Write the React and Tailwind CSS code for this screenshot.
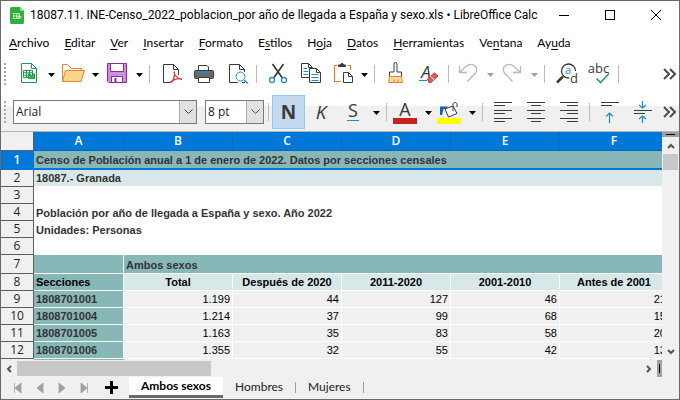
import React, { useState } from 'react';

const MENUS = [
  ['', 'A', 'rchivo'],
  ['', 'E', 'ditar'],
  ['', 'V', 'er'],
  ['', 'I', 'nsertar'],
  ['', 'F', 'ormato'],
  ['E', 's', 'tilos'],
  ['H', 'o', 'ja'],
  ['', 'D', 'atos'],
  ['', 'H', 'erramientas'],
  ['Ve', 'n', 'tana'],
  ['Ay', 'u', 'da'],
];

const COLUMNS = ['A', 'B', 'C', 'D', 'E', 'F'];
const HEADINGS = ['Total', 'Después de 2020', '2011-2020', '2001-2010', 'Antes de 2001'];
const ROWS = [
  { n: 9, section: '1808701001', values: ['1.199', '44', '127', '46', '21'] },
  { n: 10, section: '1808701004', values: ['1.214', '37', '99', '68', '15'] },
  { n: 11, section: '1808701005', values: ['1.163', '35', '83', '58', '20'] },
  { n: 12, section: '1808701006', values: ['1.355', '32', '55', '42', '13'] },
];
const SHEETS = ['Ambos sexos', 'Hombres', 'Mujeres'];

const DARK = '#3a3a38';
const BLUE = '#1e8bcd';

function Icon({ children }) {
  return (
    <svg viewBox="0 0 32 28" fill="none" stroke={DARK} className="w-8 h-7 shrink-0 overflow-visible" aria-hidden="true">
      {children}
    </svg>
  );
}

function IconText({ children, ...props }) {
  return (
    <text stroke="none" fill={DARK} fontFamily="'Open Sans', sans-serif" textAnchor="middle" {...props}>
      {children}
    </text>
  );
}

const icons = {
  newSheet: (
    <Icon>
      <path d="M8.500 3.500H18.500L23.500 8.500V22.500H8.500Z" fill="#fff" stroke="#1f9a4a" />
      <path d="M18.500 3.500V8.500H23.500" stroke="#1f9a4a" />
      <path d="M10.500 10.500H19.500V17.500H10.500ZM10.500 12.800H19.500M10.500 15.200H19.500M13.500 10.500V17.500M16.500 10.500V17.500" stroke="#1f9a4a" />
      <path d="M15.500 18.500V14H17.500V16H19.500V14H21.500V18.500Z" fill="#35c35f" stroke="#1f9a4a" />
    </Icon>
  ),
  open: (
    <Icon>
      <path d="M5.500 22V4.500H10.500L14.500 8.500H24.500V10.500" stroke="#e8822c" />
      <path d="M8.500 10.500H27.500L24 21.500H5.500Z" fill="#f9d78a" stroke="#e8822c" />
    </Icon>
  ),
  save: (
    <Icon>
      <path d="M6.500 3.500H25.500V22.500H8L6.500 21Z" fill="#cf8edb" stroke="#902a9c" />
      <path d="M9.500 3.500V11.500H22.500V3.500Z" fill="#fff" stroke="#902a9c" />
      <path d="M10.500 22.500V16.500H21.500V22.500Z" fill="#fff" stroke="#902a9c" />
      <path d="M14.500 18V22.500" stroke="#902a9c" strokeWidth="2" />
    </Icon>
  ),
  pdf: (
    <Icon>
      <path d="M17 22.500H10.500V4.500H20.500L25.500 9.500V15M20.500 4.500V9.500H25.500" />
      <path d="M21.500 12C20 12 23 18.500 28.500 19.500C29 17.500 22 18.500 17.500 22C18.500 24 22.500 17 21.500 12Z" stroke="#d8383a" strokeWidth="1.200" />
    </Icon>
  ),
  print: (
    <Icon>
      <path d="M12.500 12V5.500H21L22.500 7V12" fill="#fff" />
      <rect x="8.500" y="10.500" width="19" height="8" rx="1" fill="#6e6768" />
      <path d="M12 12H23" stroke={BLUE} strokeWidth="2" />
      <path d="M12.500 17.500H23.500V22.500H12.500Z" fill="#fff" />
    </Icon>
  ),
  preview: (
    <Icon>
      <path d="M19 22.500H10.500V4.500H20.500L25.500 9.500V12M20.500 4.500V9.500H25.500M23 22.500H26" />
      <circle cx="21.500" cy="16.500" r="4.500" stroke={BLUE} />
      <path d="M25 20L29 23.500" stroke={BLUE} strokeWidth="1.500" />
    </Icon>
  ),
  cut: (
    <Icon>
      <path d="M12.500 4L22 17.500M23.500 4L14 17.500" strokeWidth="1.700" />
      <circle cx="12" cy="20" r="2.500" stroke={BLUE} strokeWidth="1.300" />
      <circle cx="24" cy="20" r="2.500" stroke={BLUE} strokeWidth="1.300" />
    </Icon>
  ),
  copy: (
    <Icon>
      <path d="M16 17.500H8.500V3.500H15.500L19.500 7.500M15.500 3.500V7.500H19.500" />
      <path d="M16.500 8.500H23.500L27.500 12.500V22.500H16.500ZM23.500 8.500V12.500H27.500" />
      <path d="M10.500 8.500H14M10.500 11.500H15M10.500 14.500H15M18.500 14.500H25.500M18.500 17.500H25.500M18.500 20.500H25.500" stroke={BLUE} />
    </Icon>
  ),
  paste: (
    <Icon>
      <path d="M11 5.500H8.500V21.500H15M21.500 5.500H24.500V10" stroke="#e8822c" strokeWidth="1.200" />
      <path d="M12.500 6.500V5H14.500A1.500 1.500 0 0 1 17.500 5H19.500V6.500Z" fill={DARK} />
      <path d="M17.500 12.500H22.500L26.500 16.500V22.500H17.500ZM22.500 12.500V16.500H26.500" fill="#fff" />
    </Icon>
  ),
  brush: (
    <Icon>
      <path d="M16 12V4A1.500 1.500 0 0 1 19 4V12H23.500V16.500H11.500V12Z" fill="#fff" />
      <path d="M11.500 16.500H23.500L24.500 22.500H10.500Z" fill="#fbd9a0" stroke="#e8822c" />
      <path d="M15.500 22L17 19.500M19.500 22L20.500 19.500" stroke="#e8822c" />
    </Icon>
  ),
  clear: (
    <Icon>
      <IconText x="15" y="18" fontSize="17" fontStyle="italic">A</IconText>
      <path d="M8 20.500H16" stroke={BLUE} />
      <path d="M16.500 19L23.500 13L27 16L20 22.500H18Z" fill="#e0575a" stroke="#d0393e" />
      <path d="M19.500 16.500L23 19.500" stroke="#fff" />
    </Icon>
  ),
  undo: (
    <Icon>
      <path d="M7.500 6V12.500H15M7.500 12.500L14 6.500C20 1.500 27.500 7 23.500 13L15.500 21.500" stroke="#b9b9b9" strokeWidth="1.300" />
    </Icon>
  ),
  redo: (
    <Icon>
      <path d="M24.500 6V12.500H17M24.500 12.500L18 6.500C12 1.500 4.500 7 8.500 13L16.500 21.500" stroke="#b9b9b9" strokeWidth="1.300" />
    </Icon>
  ),
  find: (
    <Icon>
      <path d="M21 18A7 7 0 1 1 27.500 11" strokeWidth="1.300" />
      <path d="M15 16.500L9 22.500" strokeWidth="2.500" />
      <IconText x="20" y="14" fontSize="11" fill={BLUE}>a</IconText>
      <IconText x="26" y="23" fontSize="13">d</IconText>
    </Icon>
  ),
  spelling: (
    <Icon>
      <IconText x="17.500" y="13" fontSize="13">abc</IconText>
      <path d="M15.500 18.500L19.500 22.500L28 13.500" stroke="#27a55a" strokeWidth="1.700" />
    </Icon>
  ),
  bold: (
    <Icon>
      <IconText x="16.500" y="20.500" fontSize="19" fontWeight="700">N</IconText>
    </Icon>
  ),
  italic: (
    <Icon>
      <IconText x="16" y="20.500" fontSize="19" fontStyle="italic">K</IconText>
    </Icon>
  ),
  underline: (
    <Icon>
      <IconText x="15" y="19" fontSize="18">S</IconText>
      <path d="M9 22.500H21" stroke={BLUE} />
    </Icon>
  ),
  fontColor: (
    <Icon>
      <IconText x="15" y="18" fontSize="18">A</IconText>
      <rect x="3" y="20" width="24" height="6" fill="#c9211e" stroke="none" />
    </Icon>
  ),
  highlight: (
    <Icon>
      <path d="M6 17V8.500H14L12 11H9.500L8 17Z" fill="#1565b5" stroke="none" />
      <path d="M11 11L19 8L23 15.500L14.500 19Z" fill="#fff" />
      <path d="M19 13V6C19 4 23 4 23 6V9" />
      <rect x="3" y="20" width="24" height="6" fill="#ffff00" stroke="none" />
    </Icon>
  ),
  alignLeft: (
    <Icon>
      <path d="M8 4.500H26M8 7.500H19M8 12.500H26M8 15.500H19M8 20.500H26M8 23.500H19" />
    </Icon>
  ),
  alignCenter: (
    <Icon>
      <path d="M8 4.500H26M12 7.500H22M8 12.500H26M12 15.500H22M8 20.500H26M12 23.500H22" />
    </Icon>
  ),
  alignRight: (
    <Icon>
      <path d="M8 4.500H26M15 7.500H26M8 12.500H26M15 15.500H26M8 20.500H26M15 23.500H26" />
    </Icon>
  ),
  alignTop: (
    <Icon>
      <path d="M8 4.500H26M8 7.500H19" />
      <path d="M16.500 25V15M13 18.500L16.500 15L20 18.500" stroke={BLUE} strokeWidth="1.200" />
    </Icon>
  ),
  alignMiddle: (
    <Icon>
      <path d="M8 12.500H26M8 15.500H19" />
      <path d="M16.500 3V10M13 7L16.500 10L20 7M16.500 25V18M13 21L16.500 18L20 21" stroke={BLUE} strokeWidth="1.200" />
    </Icon>
  ),
};

function ToolButton({ icon, label, active }) {
  return (
    <button
      type="button"
      aria-label={label}
      className={`flex h-[34px] w-[33px] shrink-0 items-center ${active ? 'bg-[#c3d9f0] outline-1 -outline-offset-1 outline-[#90c8f6]' : ''}`}
    >
      {icons[icon]}
    </button>
  );
}

function SplitButton({ icon, label, disabled }) {
  return (
    <div className="flex shrink-0 items-center">
      <button type="button" aria-label={label} disabled={disabled} className="flex h-[34px] w-8 items-center">
        {icons[icon]}
      </button>
      <button type="button" aria-label={`${label}: opciones`} disabled={disabled} className="flex h-[34px] w-3 items-center justify-center">
        <svg viewBox="0 0 7 4" className={`mt-0.5 h-1 w-[7px] ${disabled ? 'fill-[#a0a0a0]' : 'fill-black'}`} aria-hidden="true">
          <path d="M0 0H7L3.500 4Z" />
        </svg>
      </button>
    </div>
  );
}

function Divider() {
  return (
    <span className="flex w-2 shrink-0 justify-center">
      <span className="h-[18px] w-px bg-[#bcbcbc]" />
    </span>
  );
}

function Grip() {
  return <span className="mr-[7px] ml-[3px] h-[22px] w-0.5 shrink-0 bg-[repeating-linear-gradient(to_bottom,#a8a8a8_0_2px,transparent_2px_4px)]" />;
}

function Overflow() {
  return (
    <button type="button" aria-label="Más controles" className="ml-auto flex h-[34px] w-4 shrink-0 items-center">
      <svg viewBox="0 0 14 12" fill="none" stroke="#4a4a4a" strokeWidth="2" className="h-3 w-3.5" aria-hidden="true">
        <path d="M1 1L6 6L1 11M7 1L12 6L7 11" />
      </svg>
    </button>
  );
}

function Combo({ label, value, className }) {
  return (
    <div className={`grid h-6 shrink-0 border border-[#7a7a7a] bg-white ${className}`}>
      <select aria-label={label} defaultValue={value} className="col-start-1 row-start-1 appearance-none pl-0.5 text-[12px] leading-[22px] text-[#222] outline-none">
        <option>{value}</option>
      </select>
      <span className="pointer-events-none col-start-1 row-start-1 flex w-[17px] items-center justify-center justify-self-end border-l border-[#adadad] bg-[#e1e1e1]">
        <svg viewBox="0 0 9 6" fill="none" stroke="#444" className="h-1.5 w-[9px]" aria-hidden="true">
          <path d="M.5 .5L4.500 4.500L8.500 .5" />
        </svg>
      </span>
    </div>
  );
}

function TitleBar() {
  return (
    <header className="flex h-7 items-center pl-[9px]">
      <svg viewBox="0 0 15 17" className="h-[17px] w-[15px] shrink-0" aria-hidden="true">
        <path d="M1.500 0H10L14 4V15.500A1.500 1.500 0 0 1 12.500 17H1.500A1.500 1.500 0 0 1 0 15.500V1.500A1.500 1.500 0 0 1 1.500 0Z" fill="#2fae3c" />
        <path d="M10 0L14 4H10Z" fill="#8be08f" />
        <path d="M3.500 6.500H9.500V11.500H3.500ZM3.500 9H9.500M6.500 6.500V11.500M8 11.500V9.500H11V11.500" fill="none" stroke="#e6ffe8" strokeWidth=".8" />
      </svg>
      <h1 className="ml-[5px] truncate font-['Roboto',sans-serif] text-[12px]">18087.11. INE-Censo_2022_poblacion_por año de llegada a España y sexo.xls • LibreOffice Calc</h1>
      <div className="ml-auto flex shrink-0">
        <button type="button" aria-label="Minimizar" className="flex h-7 w-[46px] items-center justify-center">
          <span className="h-px w-2.5 bg-black" />
        </button>
        <button type="button" aria-label="Maximizar" className="flex h-7 w-[46px] items-center justify-center">
          <span className="size-2.5 border border-black" />
        </button>
        <button type="button" aria-label="Cerrar" className="flex h-7 w-[46px] items-center justify-center">
          <svg viewBox="0 0 10 10" stroke="#000" className="size-2.5" aria-hidden="true">
            <path d="M0 0L10 10M10 0L0 10" />
          </svg>
        </button>
      </div>
    </header>
  );
}

function RowHeader({ children, active }) {
  return (
    <th
      scope="row"
      className={`border-r border-b font-['Open_Sans',sans-serif] text-[12px] leading-none ${active ? 'border-[#0078d7] bg-[#0078d7] font-semibold text-white' : 'border-[#5e5e5e] bg-[#f0f0f0] font-normal text-[#222]'}`}
    >
      {children}
    </th>
  );
}

const cell = 'px-0.5 pb-px align-bottom leading-[13px] whitespace-nowrap';

function Sheet() {
  return (
    <div className="min-w-0 flex-1 overflow-hidden">
      <table className="w-[668px] table-fixed border-separate border-spacing-0 font-['Liberation_Sans',Arial,sans-serif] text-[11px]">
        <colgroup>
          <col className="w-[33px]" />
          <col className="w-[90px]" />
          <col span={5} className="w-[109px]" />
        </colgroup>
        <thead className="font-['Open_Sans',sans-serif]">
          <tr className="h-[19px]">
            <th aria-label="Seleccionar todo" className="border-r border-b border-[#5e5e5e] bg-[#f0f0f0]" />
            {COLUMNS.map((c) => (
              <th key={c} scope="col" className="border-r border-b border-[#0067b9] bg-[#0078d7] text-[12px] leading-none font-semibold text-white">
                {c}
              </th>
            ))}
          </tr>
        </thead>
        <tbody>
          <tr className="h-[19px]">
            <RowHeader active>1</RowHeader>
            <td colSpan={6} className={`${cell} border-b-2 border-[#0078d7] bg-[#88b7b7] font-bold text-[#333]`}>
              Censo de Población anual a 1 de enero de 2022. Datos por secciones censales
            </td>
          </tr>
          <tr className="h-[17px]">
            <RowHeader>2</RowHeader>
            <td colSpan={6} className={`${cell} border-b border-white bg-[#d8e8e8] font-bold text-[#333]`}>18087.- Granada</td>
          </tr>
          <tr className="h-[17px]">
            <RowHeader>3</RowHeader>
            <td colSpan={6} />
          </tr>
          <tr className="h-[17px]">
            <RowHeader>4</RowHeader>
            <td colSpan={6} className={`${cell} font-bold text-[#333]`}>Población por año de llegada a España y sexo. Año 2022</td>
          </tr>
          <tr className="h-[17px]">
            <RowHeader>5</RowHeader>
            <td colSpan={6} className={`${cell} font-bold text-[#333]`}>Unidades: Personas</td>
          </tr>
          <tr className="h-[17px]">
            <RowHeader>6</RowHeader>
            <td colSpan={6} />
          </tr>
          <tr className="h-[19px]">
            <RowHeader>7</RowHeader>
            <td className="border-r border-b border-white bg-[#88b7b7]" />
            <td colSpan={5} className={`${cell} border-b border-white bg-[#88b7b7] font-bold text-[#333]`}>Ambos sexos</td>
          </tr>
          <tr className="h-[17px]">
            <RowHeader>8</RowHeader>
            <td className={`${cell} border-r border-b border-white bg-[#88b7b7] font-bold`}>Secciones</td>
            {HEADINGS.map((h) => (
              <td key={h} className={`${cell} border-r border-b border-white bg-[#d8e8e8] text-center font-bold`}>{h}</td>
            ))}
          </tr>
          {ROWS.map((row) => (
            <tr key={row.n} className="h-[17px]">
              <RowHeader>{row.n}</RowHeader>
              <td className={`${cell} border-r border-b border-white bg-[#88b7b7] font-bold text-[#333]`}>{row.section}</td>
              {row.values.map((v, i) => (
                <td key={HEADINGS[i]} className={`${cell} border-r border-b border-white bg-[#f0f0f0] text-right`}>{v}</td>
              ))}
            </tr>
          ))}
          <tr className="h-px" aria-hidden="true">
            <td className="bg-[#f0f0f0] p-0" />
            <td className="bg-[#88b7b7] p-0" />
            <td colSpan={5} className="bg-[#f0f0f0] p-0" />
          </tr>
        </tbody>
      </table>
    </div>
  );
}

function Arrow({ d }) {
  return (
    <svg viewBox="0 0 8 8" fill="none" stroke="#555" strokeWidth="2" className="size-2 shrink-0" aria-hidden="true">
      <path d={d} />
    </svg>
  );
}

function VerticalScroll() {
  return (
    <div className="flex w-[17px] shrink-0 flex-col items-center bg-[#f0f0f0]">
      <span className="flex h-[5px] w-full items-center justify-center bg-[#a0a0a0]">
        <span className="h-px w-[9px] bg-black" />
      </span>
      <button type="button" aria-label="Subir" className="flex h-[17px] w-full items-center justify-center">
        <Arrow d="M1 6L4 3L7 6" />
      </button>
      <span className="h-4 w-[15px] bg-[#c8c8c8]" />
      <button type="button" aria-label="Bajar" className="mt-auto flex h-[17px] w-full items-center justify-center">
        <Arrow d="M1 2L4 5L7 2" />
      </button>
    </div>
  );
}

function HorizontalScroll() {
  return (
    <div className="flex h-[17px] items-center bg-[#f0f0f0] pr-[17px]">
      <button type="button" aria-label="Izquierda" className="flex h-full w-4 items-center justify-center">
        <Arrow d="M6 1L3 4L6 7" />
      </button>
      <span className="h-[15px] w-[194px] bg-[#c8c8c8]" />
      <button type="button" aria-label="Derecha" className="ml-auto flex h-full w-4 items-center justify-center">
        <Arrow d="M2 1L5 4L2 7" />
      </button>
      <span className="flex h-full w-[5px] items-center justify-center bg-[#a0a0a0]">
        <span className="h-[9px] w-px bg-black" />
      </span>
    </div>
  );
}

const NAV = [
  ['Primera hoja', 'M1.500 1V11M8 1V11L2 6Z'],
  ['Hoja anterior', 'M8 1V11L2 6Z'],
  ['Hoja siguiente', 'M2 1V11L8 6Z'],
  ['Última hoja', 'M2 1V11L8 6ZM8.500 1V11'],
];

function SheetTabs() {
  const [current, setCurrent] = useState(SHEETS[0]);
  return (
    <nav className="flex h-[21px] items-stretch bg-[#f0f0f0] pl-1.5 font-['Lato',sans-serif] text-[12px]">
      {NAV.map(([label, d]) => (
        <button key={label} type="button" aria-label={label} className="flex w-[22px] items-center justify-center">
          <svg viewBox="0 0 10 12" fill="#a0a0a0" stroke="#a0a0a0" strokeWidth=".8" className="h-3 w-2.5" aria-hidden="true">
            <path d={d} />
          </svg>
        </button>
      ))}
      <button type="button" aria-label="Añadir hoja" className="mr-1 ml-[3px] flex w-[27px] items-center justify-center">
        <svg viewBox="0 0 13 13" stroke="#000" strokeWidth="3" className="size-[13px]" aria-hidden="true">
          <path d="M6.500 0V13M0 6.500H13" />
        </svg>
      </button>
      {SHEETS.map((name) => (
        <button
          key={name}
          type="button"
          onClick={() => setCurrent(name)}
          className={name === current
            ? 'border-b-3 border-[#696969] bg-white px-3 leading-[18px] font-bold'
            : 'flex items-center pb-px pl-3 leading-[18px] text-[#222]'}
        >
          {name}
          {name !== current && <span className="ml-3 h-[11px] w-px bg-[#a0a0a0]" />}
        </button>
      ))}
    </nav>
  );
}

export default function App() {
  return (
    <div className="flex min-h-screen flex-col border border-[#6a6a6a] bg-white font-['Open_Sans','Noto_Sans',sans-serif] text-black">
      <TitleBar />

      <nav className="flex h-7 items-center gap-[15px] pl-2 font-['Lato',sans-serif] text-[12px]">
        {MENUS.map(([before, key, after]) => (
          <button key={key + after} type="button" className="whitespace-nowrap">
            {before}
            <span className="underline underline-offset-2">{key}</span>
            {after}
          </button>
        ))}
      </nav>

      <div className="flex h-[34px] items-center">
        <Grip />
        <SplitButton icon="newSheet" label="Nuevo" />
        <SplitButton icon="open" label="Abrir" />
        <SplitButton icon="save" label="Guardar" />
        <Divider />
        <ToolButton icon="pdf" label="Exportar a PDF" />
        <ToolButton icon="print" label="Imprimir" />
        <ToolButton icon="preview" label="Previsualizar" />
        <Divider />
        <ToolButton icon="cut" label="Cortar" />
        <ToolButton icon="copy" label="Copiar" />
        <SplitButton icon="paste" label="Pegar" />
        <Divider />
        <ToolButton icon="brush" label="Clonar formato" />
        <ToolButton icon="clear" label="Limpiar formato" />
        <Divider />
        <SplitButton icon="undo" label="Deshacer" disabled />
        <SplitButton icon="redo" label="Rehacer" disabled />
        <Divider />
        <ToolButton icon="find" label="Buscar y reemplazar" />
        <ToolButton icon="spelling" label="Ortografía" />
        <Divider />
        <Overflow />
      </div>

      <div className="flex h-10 items-center bg-[linear-gradient(to_bottom,#fff_15px,#f0f0f0_15px)] pt-0.5">
        <Grip />
        <Combo label="Nombre de la letra" value="Arial" className="w-[184px]" />
        <Combo label="Tamaño de letra" value="8 pt" className="ml-2 w-[59px]" />
        <Divider />
        <ToolButton icon="bold" label="Negrita" active />
        <ToolButton icon="italic" label="Cursiva" />
        <SplitButton icon="underline" label="Subrayado" />
        <Divider />
        <SplitButton icon="fontColor" label="Color de letra" />
        <SplitButton icon="highlight" label="Color de fondo" />
        <Divider />
        <ToolButton icon="alignLeft" label="Alinear a la izquierda" />
        <ToolButton icon="alignCenter" label="Centrar" />
        <ToolButton icon="alignRight" label="Alinear a la derecha" />
        <Divider />
        <ToolButton icon="alignTop" label="Alinear arriba" />
        <ToolButton icon="alignMiddle" label="Centrar verticalmente" />
        <Overflow />
      </div>

      <main className="flex border-t border-[#b4b4b4]">
        <Sheet />
        <VerticalScroll />
      </main>
      <HorizontalScroll />
      <SheetTabs />
      <div className="flex-1 bg-[#f0f0f0]" />
    </div>
  );
}
